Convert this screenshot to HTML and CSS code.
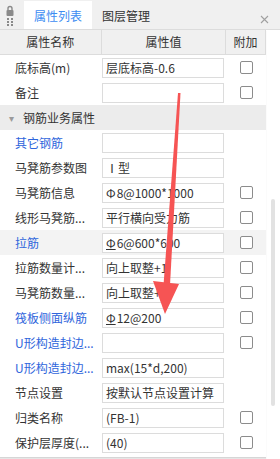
FILE: index.html
```html
<!DOCTYPE html>
<html lang="zh-CN">
<head>
<meta charset="UTF-8">
<title>属性列表</title>
<link rel="stylesheet" href="styles.css">
</head>
<body>
<div class="panel">
  <div class="tabs">
    <div class="grip">
      <svg width="8" height="22" viewBox="0 0 8 22">
        <path d="M2 6V4.5a2 2 0 0 1 4 0V6" fill="none" stroke="#8a8a8a" stroke-width="1.4"/>
        <rect x="0.5" y="6" width="7" height="6" rx="1" fill="#8a8a8a"/>
        <rect x="1" y="14" width="2" height="2" fill="#8a8a8a"/>
        <rect x="5" y="14" width="2" height="2" fill="#8a8a8a"/>
        <rect x="1" y="17" width="2" height="2" fill="#8a8a8a"/>
        <rect x="5" y="17" width="2" height="2" fill="#8a8a8a"/>
        <rect x="1" y="20" width="2" height="2" fill="#8a8a8a"/>
        <rect x="5" y="20" width="2" height="2" fill="#8a8a8a"/>
      </svg>
    </div>
    <div class="tab active">属性列表</div>
    <div class="tab">图层管理</div>
    <div class="close">
      <svg width="9" height="9" viewBox="0 0 9 9"><path d="M1 1L8 8M8 1L1 8" stroke="#a0a0a0" stroke-width="1.1"/></svg>
    </div>
  </div>

  <div class="body">
    <div class="grid">
      <div class="head">
        <div class="c1">属性名称</div>
        <div class="c2">属性值</div>
        <div class="c3">附加</div>
      </div>

      <div class="row"><div class="name">底标高(m)</div><div class="val"><div class="box">层底标高-0.6</div></div><div class="extra"><span class="chk"></span></div></div>
      <div class="row"><div class="name">备注</div><div class="val"><div class="box"></div></div><div class="extra"><span class="chk"></span></div></div>
      <div class="row section"><span class="caret">▾</span>钢筋业务属性</div>
      <div class="row"><div class="name link">其它钢筋</div><div class="val"><div class="box"></div></div><div class="extra"></div></div>
      <div class="row"><div class="name">马凳筋参数图</div><div class="val"><div class="box">Ⅰ型</div></div><div class="extra"></div></div>
      <div class="row"><div class="name">马凳筋信息</div><div class="val"><div class="box"><span class="grade">Φ</span>8@1000*1000</div></div><div class="extra"><span class="chk"></span></div></div>
      <div class="row"><div class="name">线形马凳筋...</div><div class="val"><div class="box">平行横向受力筋</div></div><div class="extra"><span class="chk"></span></div></div>
      <div class="row hover"><div class="name link">拉筋</div><div class="val"><div class="box"><span class="grade three">Φ</span>6@600*600</div></div><div class="extra"><span class="chk"></span></div></div>
      <div class="row"><div class="name">拉筋数量计...</div><div class="val"><div class="box">向上取整+1</div></div><div class="extra"><span class="chk"></span></div></div>
      <div class="row"><div class="name">马凳筋数量...</div><div class="val"><div class="box">向上取整+1</div></div><div class="extra"><span class="chk"></span></div></div>
      <div class="row"><div class="name link">筏板侧面纵筋</div><div class="val"><div class="box"><span class="grade three">Φ</span>12@200</div></div><div class="extra"><span class="chk"></span></div></div>
      <div class="row"><div class="name link">U形构造封边...</div><div class="val"><div class="box"></div></div><div class="extra"><span class="chk"></span></div></div>
      <div class="row"><div class="name link">U形构造封边...</div><div class="val"><div class="box">max(15*d,200)</div></div><div class="extra"></div></div>
      <div class="row"><div class="name">节点设置</div><div class="val"><div class="box">按默认节点设置计算</div></div><div class="extra"></div></div>
      <div class="row"><div class="name">归类名称</div><div class="val"><div class="box">(FB-1)</div></div><div class="extra"><span class="chk"></span></div></div>
      <div class="row"><div class="name">保护层厚度(...</div><div class="val"><div class="box">(40)</div></div><div class="extra"><span class="chk"></span></div></div>
    </div>
    <div class="scroll"><div class="thumb"></div></div>
  </div>

  <!-- annotation arrow drawn over the list -->
  <svg class="mark" width="280" height="459" viewBox="0 0 280 459">
    <polygon points="178,93 180.5,93 170,285 163.5,285" fill="#f65454"/>
    <polygon points="153,281 179,284 165,314" fill="#f65454"/>
  </svg>
</div>
</body>
</html>
```

FILE: styles.css
```css
body {
  margin: 0;
  font-family: "Noto Sans CJK SC", "Liberation Sans", sans-serif;
  font-size: 12px;
  color: #333;
  background: #fff;
}
.panel {
  width: 280px;
  height: 459px;
  position: relative;
  overflow: hidden;
}
.tabs {
  height: 30px;
  display: flex;
  background: #f0f0f0;
  border-bottom: 1px solid #dcdcdc;
  box-sizing: border-box;
}
.grip {
  width: 24px;
  padding: 4px 0 0 6px;
  box-sizing: border-box;
}
.tab {
  padding: 0 10px;
  line-height: 29px;
  margin-top: 1px;
  color: #333;
}
.tab.active {
  background: #fff;
  color: #3d8cf2;
}
.close {
  margin-left: auto;
  width: 20px;
  padding-top: 10px;
  box-sizing: border-box;
}
.body {
  display: flex;
  height: 429px;
}
.grid {
  width: 266px;
  height: 427px;
  border-bottom: 1px solid #d6d6d6;
  box-shadow: 0 1px 1px #e6e6e6;
}
.head {
  display: flex;
  height: 25px;
  background: #f0f0f0;
  border-bottom: 1px solid #dcdcdc;
  box-sizing: border-box;
  line-height: 24px;
  text-align: center;
}
.head > div {
  border-right: 1px solid #dcdcdc;
  box-sizing: border-box;
}
.head .c1 { width: 102px; }
.head .c2 { width: 125px; }
.head .c3 { width: 40px; }
.row {
  display: flex;
  align-items: center;
  height: 25px;
}
.row.section {
  background: #ececec;
  padding-left: 9px;
}
.row.hover {
  background: #f3f3f3;
}
.caret {
  color: #9a9a9a;
  font-size: 10px;
  width: 14px;
}
.name {
  width: 101px;
  padding-left: 15px;
  box-sizing: border-box;
  white-space: nowrap;
  overflow: hidden;
}
.name.link {
  color: #2f66dc;
}
.val {
  width: 125px;
}
.box {
  margin-left: 1px;
  width: 122px;
  height: 20px;
  border: 1px solid #dcdcdc;
  box-sizing: border-box;
  background: #fff;
  line-height: 18px;
  padding-left: 3px;
  white-space: nowrap;
  overflow: hidden;
}
.grade {
  font-size: 12px;
  margin-right: 1px;
}
.grade.three {
  text-decoration: underline;
}
.extra {
  width: 40px;
  display: flex;
  justify-content: center;
}
.chk {
  width: 13px;
  height: 13px;
  border: 1px solid #8c8c8c;
  border-radius: 2px;
  box-sizing: border-box;
  background: #fff;
}
.scroll {
  width: 14px;
  padding: 169px 0 0 5px;
  box-sizing: border-box;
}
.thumb {
  width: 4px;
  height: 207px;
  border-radius: 2px;
  background: #e2e2e2;
}
.mark {
  position: absolute;
  top: 0;
  left: 0;
  pointer-events: none;
}
```
